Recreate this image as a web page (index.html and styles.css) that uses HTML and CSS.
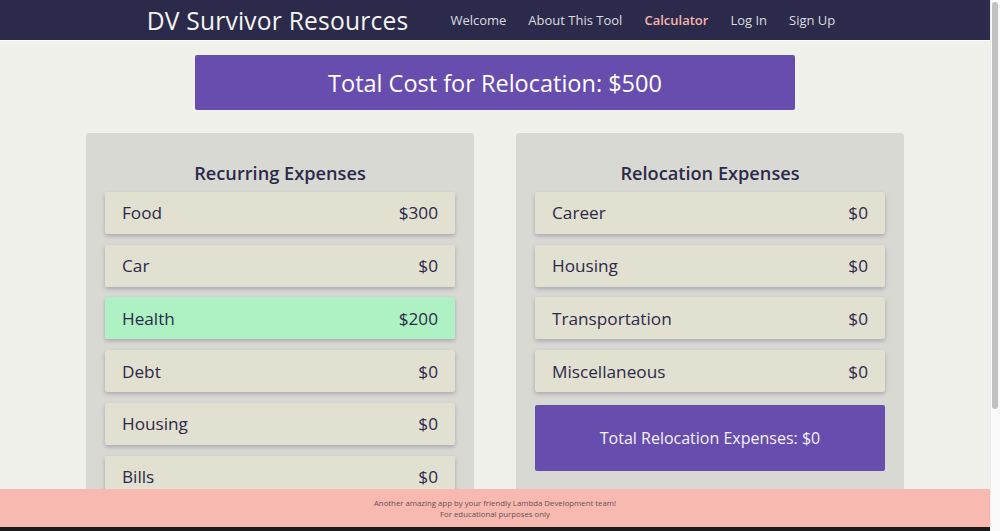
FILE: index.html
```html
<!DOCTYPE html>
<html lang="en">
<head>
<meta charset="utf-8">
<title>DV Survivor Resources</title>
<link rel="stylesheet" href="styles.css">
</head>
<body>
<div class="page">
  <header class="topbar">
    <div class="brand">DV Survivor Resources</div>
    <nav class="nav">
      <a class="nav-link" href="#">Welcome</a>
      <a class="nav-link" href="#">About This Tool</a>
      <a class="nav-link active" href="#">Calculator</a>
      <a class="nav-link" href="#">Log In</a>
      <a class="nav-link" href="#">Sign Up</a>
    </nav>
  </header>
  <main class="main">
    <div class="total-banner">Total Cost for Relocation: $500</div>
    <div class="panels">
      <section class="panel">
        <h2 class="panel-title">Recurring Expenses</h2>
        <div class="item"><span>Food</span><span>$300</span></div>
        <div class="item"><span>Car</span><span>$0</span></div>
        <div class="item selected"><span>Health</span><span>$200</span></div>
        <div class="item"><span>Debt</span><span>$0</span></div>
        <div class="item"><span>Housing</span><span>$0</span></div>
        <div class="item"><span>Bills</span><span>$0</span></div>
      </section>
      <section class="panel">
        <h2 class="panel-title">Relocation Expenses</h2>
        <div class="item"><span>Career</span><span>$0</span></div>
        <div class="item"><span>Housing</span><span>$0</span></div>
        <div class="item"><span>Transportation</span><span>$0</span></div>
        <div class="item"><span>Miscellaneous</span><span>$0</span></div>
        <div class="panel-total">Total Relocation Expenses: $0</div>
      </section>
    </div>
  </main>
  <footer class="footer">
    <p>Another amazing app by your friendly Lambda Development team!</p>
    <p>For educational purposes only</p>
  </footer>
</div>
<div class="scrollbar"><div class="scroll-thumb"></div></div>
</body>
</html>
```
FILE: styles.css
```css
body {
  margin: 0;
  background: #f1f1ec;
  font-family: "Open Sans", "Noto Sans", sans-serif;
  color: #2c2a4a;
}
.page {
  margin-right: 10px;
}
.topbar {
  height: 40px;
  background: #2c2a4a;
  border-bottom: 1px solid #fbfbf8;
  display: flex;
  align-items: center;
  justify-content: center;
  gap: 42px;
  padding-right: 8px;
}
.brand {
  color: #f4f4f0;
  font-size: 24.6px;
  letter-spacing: 0.2px;
}
.nav {
  display: flex;
  gap: 22px;
}
.nav-link {
  color: #dcdce0;
  font-size: 13px;
  text-decoration: none;
}
.nav-link.active {
  color: #f7b5ae;
  font-weight: 600;
}
.main {
  display: flex;
  flex-direction: column;
  align-items: center;
  padding-top: 14px;
  padding-bottom: 173px;
}
.total-banner {
  width: 600px;
  height: 55px;
  box-sizing: border-box;
  background: #674dad;
  border-radius: 2px;
  color: #fff;
  font-size: 23.5px;
  display: flex;
  align-items: center;
  justify-content: center;
}
.panels {
  margin-top: 23px;
  display: flex;
  gap: 42px;
}
.panel {
  width: 388px;
  box-sizing: border-box;
  background: #d9d9d4;
  border-radius: 3px;
  padding: 27px 19px 21px;
  display: flex;
  flex-direction: column;
  gap: 10.8px;
}
.panel-title {
  margin: 0 0 -5px;
  text-align: center;
  font-size: 18.2px;
  font-weight: 600;
  line-height: 26px;
}
.item {
  height: 42px;
  box-sizing: border-box;
  background: #e2e0d0;
  border-radius: 2px;
  box-shadow: 0 2px 4px rgba(90, 70, 110, 0.35);
  padding: 0 17px;
  display: flex;
  align-items: center;
  justify-content: space-between;
  font-size: 17.2px;
}
.item.selected {
  background: #aef2c4;
}
.panel-total {
  margin-top: 2px;
  height: 66px;
  background: #674dad;
  border-radius: 2px;
  color: #f4f2fa;
  font-size: 16px;
  display: flex;
  align-items: center;
  justify-content: center;
}
.footer {
  position: fixed;
  left: 0;
  right: 10px;
  bottom: 0;
  height: 37px;
  padding-top: 1px;
  background: #f8b9b0;
  border-bottom: 4px solid #1a1a1a;
  display: flex;
  flex-direction: column;
  align-items: center;
  justify-content: center;
  color: #6a5050;
  font-size: 7.8px;
  line-height: 11px;
}
.footer p {
  margin: 0;
}
.scrollbar {
  position: fixed;
  top: 0;
  right: 0;
  bottom: 0;
  width: 10px;
  background: #fafafa;
  border-left: 1px solid #ececec;
  box-sizing: border-box;
}
.scroll-thumb {
  margin: 2px 0 0 1px;
  width: 6px;
  height: 407px;
  border-radius: 3px;
  background: #c2c2c2;
}
```
